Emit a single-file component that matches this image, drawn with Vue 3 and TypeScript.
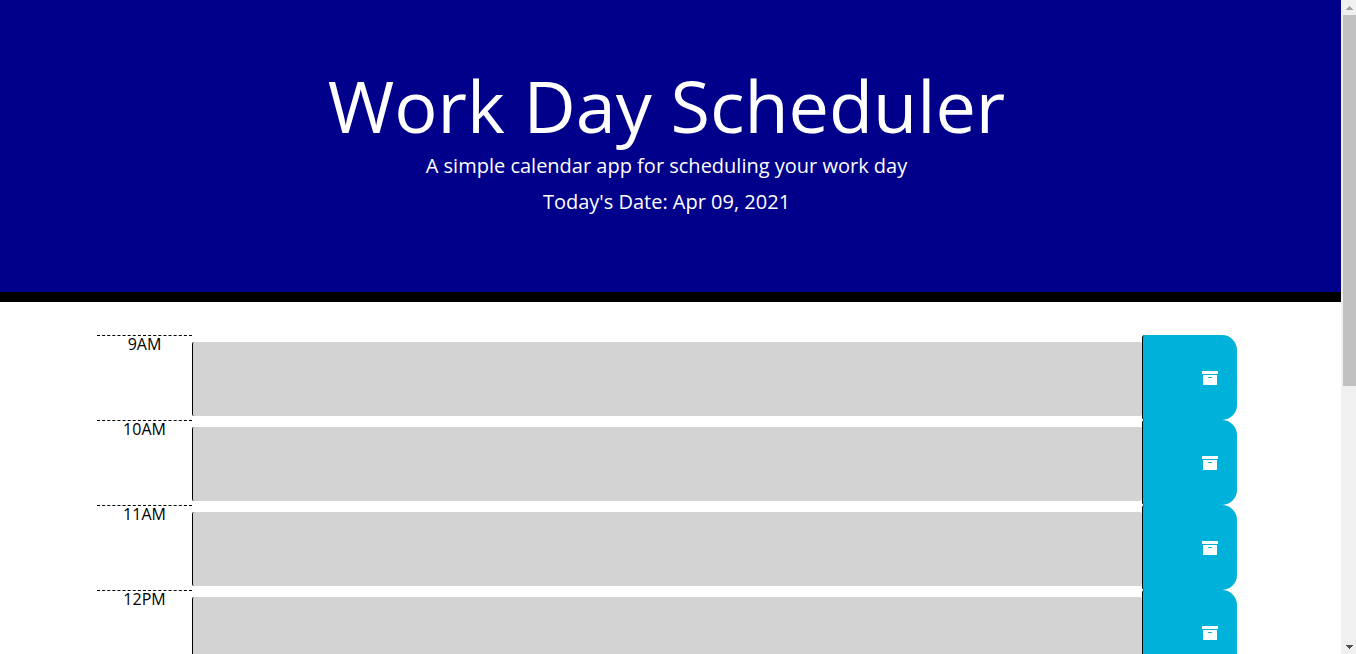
<script setup lang="ts">
import { ref } from 'vue'

interface Slot {
  label: string
  note: string
}

const today = 'Apr 09, 2021'
const slots = ref<Slot[]>(
  ['9AM', '10AM', '11AM', '12PM', '1PM', '2PM', '3PM', '4PM', '5PM'].map((label) => ({ label, note: '' })),
)
const page = ref<HTMLElement | null>(null)

function scrollPage(step: number) {
  page.value?.scrollBy({ top: step })
}
</script>

<template>
  <div class="window">
    <div ref="page" class="page">
      <header class="banner">
        <h1 class="title">Work Day Scheduler</h1>
        <p class="lead">A simple calendar app for scheduling your work day</p>
        <p class="lead">Today's Date: {{ today }}</p>
      </header>
      <main class="schedule">
        <div v-for="(slot, i) in slots" :key="slot.label" class="row">
          <label class="hour" :for="`note-${i}`">{{ slot.label }}</label>
          <textarea :id="`note-${i}`" v-model="slot.note" class="note"></textarea>
          <button type="button" class="save" :aria-label="`Save ${slot.label}`">
            <svg class="icon" viewBox="0 0 16 16" aria-hidden="true">
              <path
                fill="currentColor"
                fill-rule="evenodd"
                d="M0.5 1h15a.5.5 0 0 1 .5.5V4H0V1.500a.5.5 0 0 1 .5-.5zM1 5h14v9.500a.5.5 0 0 1-.5.5h-13a.5.5 0 0 1-.5-.5V5zm5.500 2a.5.5 0 0 0 0 1h3a.5.5 0 0 0 0-1h-3z"
              />
            </svg>
          </button>
        </div>
      </main>
    </div>
    <div class="scrollbar">
      <button type="button" class="arrow up" aria-label="Scroll up" @click="scrollPage(-40)">
        <svg viewBox="0 0 7 4" width="7" height="4" shape-rendering="crispEdges" aria-hidden="true">
          <path fill="currentColor" d="M3 0h1v1h1v1h1v1h1v1H0V3h1V2h1V1h1z" />
        </svg>
      </button>
      <div class="thumb"></div>
      <button type="button" class="arrow down" aria-label="Scroll down" @click="scrollPage(40)">
        <svg viewBox="0 0 7 4" width="7" height="4" shape-rendering="crispEdges" aria-hidden="true">
          <path fill="currentColor" d="M0 0h7v1H6v1H5v1H4v1H3V3H2V2H1V1H0z" />
        </svg>
      </button>
    </div>
  </div>
</template>

<style>
body {
  margin: 0;
}
</style>

<style scoped>
.window {
  display: flex;
  height: 100vh;
  font-family: 'Open Sans', 'Noto Sans', sans-serif;
  font-size: 16px;
  color: #000;
  background: #fff;
}
.page {
  flex: 1;
  min-width: 0;
  overflow-y: auto;
  scrollbar-width: none;
}
.banner {
  padding: 62px 8px 69px 0;
  border-bottom: 10px solid #000;
  background: #00008b;
  color: #fff;
  text-align: center;
}
.title {
  margin: 0 0 3px;
  font-size: 72px;
  font-weight: 400;
  line-height: 86px;
}
.lead {
  margin: 0 0 6px;
  font-size: 20px;
  line-height: 30px;
}
.schedule {
  padding: 33px 104px 33px 97px;
}
.row {
  display: grid;
  grid-template-columns: 1fr 10fr 1fr;
  height: 85px;
}
.hour {
  border-top: 1px dashed #000;
  line-height: 16px;
  text-align: center;
}
.note {
  box-sizing: border-box;
  height: 74px;
  margin: 7px 0 0;
  padding: 2px 6px;
  border: 0;
  border-left: 1px solid #000;
  border-radius: 2px;
  background: #d3d3d3;
  font: inherit;
  resize: none;
}
.save {
  display: flex;
  align-items: center;
  justify-content: flex-end;
  padding: 0 19px 0 0;
  border: 0;
  border-left: 1px solid #000;
  border-radius: 3px 15px 15px 3px;
  background: #00b1da;
  color: #fff;
  cursor: pointer;
}
.icon {
  width: 16px;
  height: 16px;
}
.scrollbar {
  display: flex;
  flex-direction: column;
  width: 15px;
  background: #f0f0f0;
}
.arrow {
  display: flex;
  align-items: center;
  justify-content: center;
  width: 15px;
  height: 15px;
  padding: 0 0 0 2px;
  border: 0;
  background: none;
}
.up {
  color: #a3a3a3;
}
.down {
  margin-top: auto;
  color: #505050;
}
.thumb {
  height: 371px;
  margin-left: 2px;
  background: #c1c1c1;
}
</style>
